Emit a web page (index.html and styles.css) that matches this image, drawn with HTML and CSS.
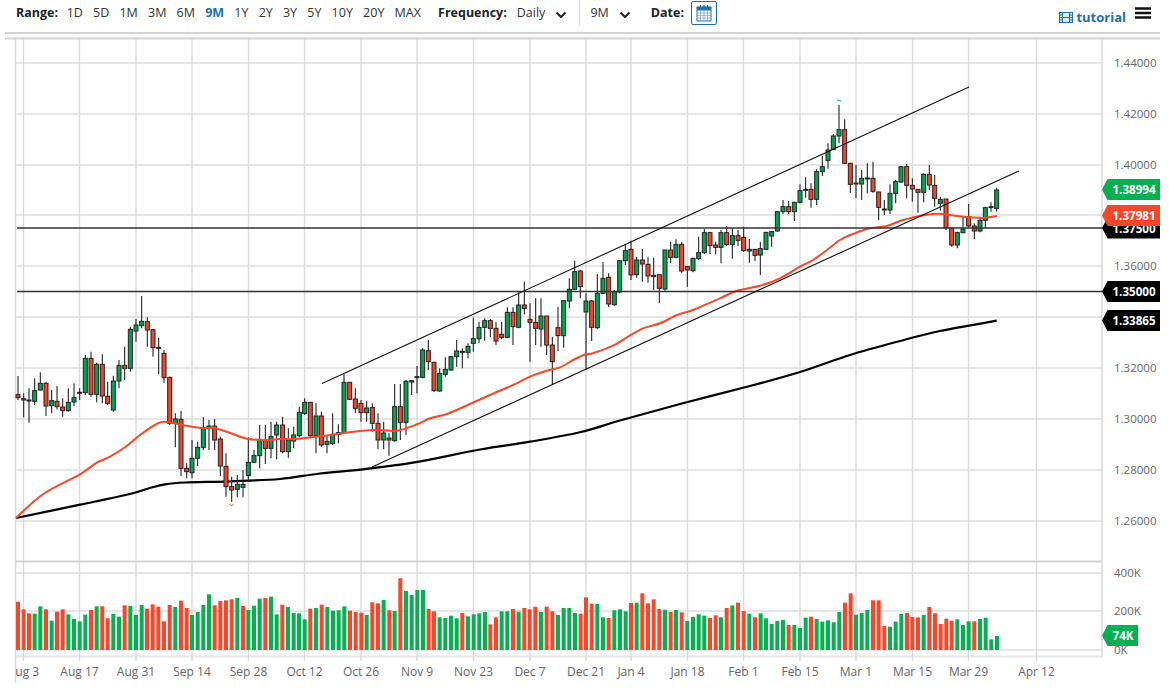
FILE: index.html
```html
<!DOCTYPE html>
<html lang="en">
<head>
<meta charset="utf-8">
<title>Chart</title>
<link rel="stylesheet" href="styles.css">
</head>
<body>
<header class="toolbar">
  <div class="controls">
    <span class="label label-range">Range:</span>
    <nav class="ranges">
      <a>1D</a><a>5D</a><a>1M</a><a>3M</a><a>6M</a><a class="active">9M</a><a>1Y</a><a>2Y</a><a>3Y</a><a>5Y</a><a>10Y</a><a>20Y</a><a>MAX</a>
    </nav>
    <span class="label label-freq">Frequency:</span>
    <span class="select select-freq">Daily
      <svg class="chevron" viewBox="0 0 12 8"><path d="M1.5 1.5 6 6l4.5-4.5"/></svg>
    </span>
    <span class="select select-period">9M
      <svg class="chevron" viewBox="0 0 12 8"><path d="M1.5 1.5 6 6l4.5-4.5"/></svg>
    </span>
    <span class="label label-date">Date:</span>
    <button class="date-btn" type="button" aria-label="Pick date">
      <svg viewBox="0 0 16 18" width="16" height="18">
        <rect class="cal-frame" x="1" y="3" width="14" height="14"/>
        <path class="cal-head" d="M1 3h14v3.500H1z"/>
        <path class="cal-rings" d="M4.500 1v4M8 1v4M11.500 1v4"/>
        <path class="cal-lines" d="M1 9h14M1 11.500h14M1 14h14M4.500 6.500V17M8 6.500V17M11.500 6.500V17"/>
      </svg>
    </button>
  </div>
  <div class="aside">
    <a class="tutorial">
      <svg viewBox="0 0 14 11" width="14" height="11">
        <rect class="film-frame" x=".5" y=".5" width="13" height="10"/>
        <path class="film-lines" d="M3.500 .5v10M10.500 .5v10M.5 3h3M.5 5.500h3M.5 8h3M10.500 3h3M10.500 5.500h3M10.500 8h3M3.500 5.500h7"/>
      </svg>
      tutorial
    </a>
    <svg class="menu" viewBox="0 0 16 12" width="16" height="12"><path d="M0 1.500h16M0 6h16M0 10.500h16"/></svg>
  </div>
</header>
<main>
  <svg id="chart" class="chart" viewBox="0 34 1169 656" width="1169" height="656" xmlns="http://www.w3.org/2000/svg"></svg>
</main>
<script src="script.js"></script>
</body>
</html>
```
FILE: styles.css
```css
html, body {
  margin: 0;
  padding: 0;
  background: #fff;
  overflow: hidden;
}
body {
  width: 1169px;
  height: 690px;
  font-family: "Open Sans", "Noto Sans", sans-serif;
  color: #333;
}
.toolbar {
  display: flex;
  justify-content: space-between;
  height: 32px;
  margin: 0 9px 0 5px;
  border-bottom: 2px solid #d4d4d4;
  box-sizing: content-box;
}
.controls {
  display: flex;
  align-items: flex-start;
  padding-left: 11px;
  height: 26px;
  line-height: 26px;
  font-size: 12.500px;
}
.label {
  font-weight: 700;
  font-size: 12.500px;
  color: #222;
}
.ranges {
  display: flex;
  margin-left: 3.500px;
}
.ranges a {
  padding: 0 5.100px;
  color: #333;
}
.ranges a.active {
  color: #1d6fb0;
  font-weight: 700;
}
.label-freq { margin-left: 12px; }
.select {
  display: flex;
  align-items: center;
  color: #333;
}
.select-freq {
  margin-left: 10px;
  padding-right: 12px;
  border-right: 1px solid #ddd;
  height: 26px;
}
.select-period { margin-left: 10px; }
.chevron {
  width: 12px;
  height: 8px;
  margin-left: 10px;
  margin-top: 4px;
  fill: none;
  stroke: #222;
  stroke-width: 2;
}
.label-date { margin-left: 20px; }
.date-btn {
  display: flex;
  align-items: center;
  justify-content: center;
  width: 26px;
  height: 24px;
  margin: 1px 0 0 7px;
  padding: 0;
  background: #fff;
  border: 1px solid #1d6fb0;
  border-radius: 2px;
}
.cal-frame { fill: #fff; stroke: #1d6fb0; stroke-width: 1; }
.cal-head { fill: #1d6fb0; }
.cal-rings { stroke: #1d6fb0; stroke-width: 1.200; fill: none; }
.cal-lines { stroke: #6fa3cd; stroke-width: .7; fill: none; }
.aside {
  display: flex;
  align-items: flex-start;
}
.tutorial {
  display: flex;
  align-items: center;
  gap: 3px;
  margin-top: 6px;
  height: 22px;
  font-size: 13px;
  font-weight: 700;
  color: #1d6fb0;
}
.film-frame { fill: #dfeaf4; stroke: #1d6fb0; stroke-width: 1; }
.film-lines { stroke: #1d6fb0; stroke-width: 1; fill: none; }
.menu {
  margin: 7px 9px 0 9px;
  fill: none;
  stroke: #111;
  stroke-width: 2.600;
}
.chart { display: block; }
.grid-h { stroke: #e6e6e6; stroke-width: 2; }
.grid-v { stroke: #dadada; stroke-width: 1.400; }
.frame { stroke: #d4d4d4; stroke-width: 2; }
.frame-thin { stroke: #d8d8d8; stroke-width: 1.500; }
.level { stroke: #333; stroke-width: 1.300; }
.channel { stroke: #111; stroke-width: 1.100; fill: none; }
.ma-red { stroke: #f4492a; stroke-width: 2; fill: none; stroke-linejoin: round; }
.ma-black { stroke: #000; stroke-width: 2.200; fill: none; stroke-linejoin: round; }
.wick { stroke: #222; stroke-width: 1.100; }
.body-g { fill: #07a04f; stroke: #222; stroke-width: 1; }
.body-r { fill: #f0452a; stroke: #222; stroke-width: 1; }
.vol-g { fill: #04b04f; }
.vol-r { fill: #f6472a; }
.mark-g { stroke: #04b04f; stroke-width: 1; fill: none; }
.mark-r { stroke: #f6472a; stroke-width: 1; fill: none; }
.axis-y, .axis-x {
  font-family: "Open Sans", "Noto Sans", sans-serif;
  fill: #666;
}
.axis-y { font-size: 11.500px; }
.axis-x { font-size: 12px; text-anchor: middle; }
.tag-g { fill: #04b04f; }
.tag-r { fill: #f6472a; }
.tag-k { fill: #000; }
.tag-text {
  font-family: "Open Sans", "Noto Sans", sans-serif;
  font-size: 11.600px;
  font-weight: 700;
  fill: #fff;
  text-anchor: middle;
}
```
FILE: script.js
```js
(function () {
  var NS = 'http://www.w3.org/2000/svg';
  var svg = document.getElementById('chart');

  function el(name, cls, attrs, text, parent) {
    var n = document.createElementNS(NS, name);
    if (cls) n.setAttribute('class', cls);
    for (var k in attrs) n.setAttribute(k, attrs[k]);
    if (text !== undefined) n.textContent = text;
    (parent || svg).appendChild(n);
    return n;
  }
  function line(cls, x1, y1, x2, y2) {
    return el('line', cls, { x1: x1, y1: y1, x2: x2, y2: y2 });
  }
  /* smooth a list of "x,y" points into a Catmull-Rom curve */
  function smooth(str) {
    var p = str.split(' ').map(function (s) { return s.split(',').map(Number); });
    var d = 'M' + p[0][0] + ' ' + p[0][1];
    for (var i = 0; i < p.length - 1; i++) {
      var a = p[Math.max(i - 1, 0)], b = p[i], c = p[i + 1], e = p[Math.min(i + 2, p.length - 1)];
      d += 'C' + (b[0] + (c[0] - a[0]) / 6).toFixed(1) + ' ' + (b[1] + (c[1] - a[1]) / 6).toFixed(1) + ' ' +
        (c[0] - (e[0] - b[0]) / 6).toFixed(1) + ' ' + (c[1] - (e[1] - b[1]) / 6).toFixed(1) + ' ' + c[0] + ' ' + c[1];
    }
    return d;
  }

  var defs = el('defs');
  var clip = el('clipPath', '', { id: 'axis-clip' }, undefined, defs);
  el('rect', '', { x: 16, y: 660, width: 1086, height: 30 }, undefined, clip);

  /* grid; a price whose label sits under a tag keeps its line but shows no text */
  var L = 15.5, R = 1102, TOP = 39;
  var prices = [['1.44000', 63], ['1.42000', 114], ['1.40000', 165], ['', 215], ['1.36000', 266],
    ['', 317], ['1.32000', 368], ['1.30000', 419], ['1.28000', 470], ['1.26000', 521]];
  prices.forEach(function (p) { line('grid-h', L, p[1], R, p[1]); });
  [573, 611, 650, 656.5].forEach(function (y) { line('grid-h', L, y, R, y); });

  var dates = [['Aug 3', 23.5], ['Aug 17', 79.5], ['Aug 31', 136], ['Sep 14', 192], ['Sep 28', 248.5],
    ['Oct 12', 304.5], ['Oct 26', 361], ['Nov 9', 417], ['Nov 23', 473.5], ['Dec 7', 530], ['Dec 21', 586],
    ['Jan 4', 631], ['Jan 18', 687.5], ['Feb 1', 743.5], ['Feb 15', 800], ['Mar 1', 856], ['Mar 15', 912.5],
    ['Mar 29', 968.5], ['Apr 12', 1036.5]];
  dates.forEach(function (d) {
    line('grid-v', d[1], TOP, d[1], 561);
    line('grid-v', d[1], 562, d[1], 661);
  });
  line('frame', 5, 38.5, 1160, 38.5);
  line('frame', L, 561.5, R, 561.5);
  line('frame-thin', L, TOP, L, 683);
  line('frame-thin', R, TOP, R, 657);

  /* volume: [x in 1/3 px, top in 1/3 px from y=560, colour] grouped by x offset */
  var vol = [
    [0, '54:125r 71:148r 87:160r 104:161g 121:139g 138:148r 155:182g 171:155r 188:148r 205:163g 222:177g 239:184g 256:164g 273:150r 290:139g 307:139r 323:175r 340:162g 357:170g 374:136r 391:138g 408:165g 425:135g 441:146r 458:133r 475:140r 492:184r 509:135r 526:141g 543:122r 560:144r 576:165g 593:156g 610:135g 627:103g 644:136r 661:123r 678:121r 695:118r 712:114g 729:138r 745:150g 762:137g 779:116g 796:114r 813:110g 830:163g 847:134r 864:141g 881:159g 897:160g'],
    [300, '14:178g 31:146r 48:144g 65:134r 82:141g 99:152g 116:151g 133:139g 150:152r 167:156r 184:158r 200:165g 217:127r 234:130r 251:120g 268:151r 284:153g 301:55r 318:93g 335:105g 352:90g 369:90g 386:147r 402:154r 419:172g 436:174g 453:167g 470:175g 487:159r 504:169g 521:163g 538:160g 555:156g 571:193r 588:172r 605:154g 622:154g 639:147r 656:155g 673:144r 689:148r 706:140r 723:156g 740:140r 757:154r 774:165g 791:144g 808:144g 825:159g 842:161r 858:112r 875:131r 892:132g'],
    [600, '9:172g 26:174r 43:151g 60:148g 77:154g 93:129r 110:128g 127:100r 144:130r 161:118r 178:147r 195:149g 212:156r 228:150g 245:157r 262:183g 279:171g 296:163g 313:167g 330:174r 347:166r 363:172g 380:144r 397:136g 414:128r 431:153r 448:161g 465:172r 482:160g 498:175g 515:192g 532:183g 549:180g 566:195r 583:195g 600:204g 617:173g 633:170r 650:177g 667:185g 684:181g 701:187g 718:156g 735:128r 752:100r 768:164g 785:159g 802:150g 819:121r 836:121r 853:198r 870:200g 887:185g'],
    [869, '97:162g 114:159r 130:171r 147:172r 164:165g 181:141r 198:160r 215:192r 232:176r 248:182r 265:178g 282:195g 299:184g 316:184r 333:177g 350:173g 367:238g 384:228g']
  ];
  vol.forEach(function (g) {
    g[1].split(' ').forEach(function (s) {
      var m = s.match(/(\d+):(\d+)([rg])/);
      var x = g[0] + m[1] / 3, y = 560 + m[2] / 3;
      el('rect', 'vol-' + m[3], { x: x - 2, y: y, width: 4, height: 650 - y });
    });
  });

  /* moving averages */
  var black = '16,518 80,504.7 130,494 150,488 165,484.3 185,482.5 231,481.3 280,479 320,473.5 363,469.3 413,462.7 480,449.5 530,441.7 580,432.3 620,420.5 680,404 750,386 800,372 850,355 900,341 940,331 996.7,320.7';
  var red = '16,518 43.3,494 80,474.3 96.7,462.7 110,456.7 125,447.3 140,435 156.7,424 165,421.7 183,425 203,428.3 213,427.7 226.7,431.7 246.7,438.7 266.7,440 280,439 295,439 323,436 343,433.3 360,431 380,430 397,430.7 417,424.3 430,418.3 447,414 470,404 490,395 513,385 530,376.7 547,370.7 560,367.3 575,359 586,354.3 593,353.3 613,345.7 627,337.3 643,328.3 660,323.3 677,315 693,310 720,298.3 737,290.7 760,285.7 780,278.3 800,266.7 813,260 827,250 840,240 853,234 870,228.3 887,226 903,220 920,216 933,214 943,214 957,216 970,217.3 983,218 997,216';
  el('path', 'ma-black', { d: smooth(black) });

  /* candles: zx high top bottom low colour, in 1/3 px of a crop */
  var candles = [
    [0, 340, '54 108 164 173 180 r|71 160 176 180 232 r|87 145 180 183 248 r|104 115 152 184 195 g|121 97 130 150 152 g|138 125 130 198 228 r|155 150 182 197 220 g|171 138 184 200 208 r|188 175 201 212 230 r|205 145 187 212 215 g|222 130 173 186 198 g|239 145 157 160 180 g|256 45 55 158 165 g|273 35 55 163 170 r|290 68 73 163 187 g|307 43 73 168 190 r|323 125 169 190 195 r'],
    [100, 285, '40 272 288 375 380 g|57 225 241 288 310 g|74 185 241 250 285 r|91 125 133 250 260 g|108 102 120 138 170 g|125 33 109 122 130 g|142 97 110 135 185 r|159 132 134 188 215 r|176 158 187 190 268 r|192 195 205 278 293 r'],
    [0, 340, '509 110 112 250 255 r|526 220 237 250 322 g|543 212 238 385 408 r|560 370 385 395 415 r|576 300 355 398 415 g|593 305 322 355 378 g|610 232 263 322 330 g|627 240 258 263 330 g|644 238 258 300 330 r|661 290 297 378 408 r|678 340 379 440 470 r|695 410 440 450 485 r|712 405 433 448 472 g|729 390 433 442 472 g|745 292 367 407 425 g|762 330 347 367 370 g|779 255 299 347 385 g|796 255 299 325 372 r|813 245 290 325 355 g|830 245 255 285 358 g'],
    [280, 280, '8 410 435 515 520 r|25 445 480 515 533 g|41 440 465 483 505 g|58 380 397 467 472 g|74 355 367 400 405 g|91 367 367 467 475 r|108 370 408 467 520 g|124 395 408 495 500 r|141 465 484 493 520 g|158 400 463 491 495 g|175 433 458 463 490 g|192 283 307 458 462 g|209 307 307 358 360 r|226 325 357 385 400 r|243 360 370 398 425 r|260 362 384 398 425 g|277 370 383 430 455 r|294 400 430 480 508 r|311 425 459 480 508 g|327 460 474 480 527 r|344 312 380 482 485 g|361 312 380 427 480 r|378 300 304 427 465 g|395 300 302 306 345 g|411 258 290 292 340 g|428 205 210 292 295 g|445 180 212 245 270 r|462 245 247 332 335 r|479 265 280 333 335 g|496 232 268 283 290 g|513 228 230 270 272 g|530 180 213 230 260 g|547 205 214 217 265 r|564 190 199 217 235 g|580 113 176 190 215 g|597 125 142 176 190 g|614 115 122 142 182 g|631 117 122 145 172 r|648 125 145 183 195 r|665 125 163 172 178 r|682 82 97 172 175 g|699 82 97 140 195 r|716 37 75 142 145 g|733 5 75 85 103 r|750 70 118 127 245 r|767 55 127 145 195 r|783 55 108 147 200 g|800 108 108 195 225 r|817 170 195 245 313 r|834 80 143 167 213 r|851 62 62 167 203 g'],
    [560, 200, '28 235 268 303 325 g|44 182 215 268 270 g|61 210 213 260 295 r|78 280 303 336 510 g|95 300 303 382 423 r|112 222 280 383 387 g|129 186 235 280 282 g|146 220 232 312 322 r|163 270 275 314 317 g|179 182 182 276 280 g|196 133 152 182 195 g|213 122 148 225 240 r|230 170 180 224 233 g|247 147 180 192 245 r|264 170 193 228 248 r|281 173 226 230 270 r|298 225 224 265 310 r|315 150 150 267 272 g|332 125 150 172 190 r|348 118 133 172 175 g|365 125 133 213 218 r|382 200 200 210 260 r|399 173 175 212 217 g|416 110 158 176 180 g|433 87 98 158 162 g|450 95 98 137 163 r|467 125 135 142 163 r|483 90 98 142 190 g|500 78 98 133 138 r|517 85 107 133 176 g|534 90 107 121 138 r|551 80 112 152 155 r|568 117 148 153 188 g|585 148 148 166 183 r|601 125 146 165 225 g|618 97 97 148 150 g|635 93 95 108 140 g'],
    [770, 90, '22 365 365 423 425 g|39 330 350 365 372 g|56 333 350 365 372 r|73 335 337 365 393 g|90 283 302 337 340 g|107 262 298 301 323 g|123 280 298 328 353 r|140 238 245 328 345 g|157 198 230 245 258 g|174 160 180 211 236 g|190 132 138 178 180 g|207 45 119 138 160 g|224 88 119 220 222 r|241 218 220 283 308 r|258 225 279 282 325 r|275 240 265 282 330 g|292 220 264 267 310 g|309 215 265 304 308 r|326 305 306 352 390 r|343 330 357 360 375 r|360 283 310 360 372 g|377 270 275 310 340 g|393 228 230 276 278 g|410 222 230 286 325 r|427 265 286 297 335 r|444 298 298 307 368 r|461 250 253 307 337 g|478 225 253 285 300 r|494 255 286 325 350 r|511 320 328 340 362 g|528 327 327 413 420 r|545 413 415 465 470 r|562 425 428 465 475 g|579 380 417 428 430 g|596 342 380 408 412 r|613 400 408 423 447 r|630 380 391 423 427 g|646 350 353 391 415 g|663 337 350 352 365 g|680 293 300 355 365 g']
  ];
  candles.forEach(function (g) {
    g[2].split('|').forEach(function (s) {
      var p = s.split(' ');
      var x = g[0] + p[0] / 3;
      var y = function (v) { return g[1] + v / 3; };
      line('wick', x, y(+p[1]), x, y(+p[4]));
      el('rect', 'body-' + p[5], { x: x - 2, y: y(+p[2]), width: 4, height: Math.max(1, (p[3] - p[2]) / 3) });
    });
  });

  el('path', 'ma-red', { d: smooth(red) });

  line('level', 17, 228, R, 228);
  line('level', 17, 291.5, R, 291.5);
  line('channel', 322, 383.5, 969, 87);
  line('channel', 372, 467, 1019, 171);

  el('path', 'mark-g', { d: 'M837 100.500q1-1 2 0t2 0' });
  el('path', 'mark-r', { d: 'M229.500 504.500q2 2 4 0' });

  /* axis labels */
  prices.forEach(function (p) { if (p[0]) el('text', 'axis-y', { x: 1114, y: p[1] + 4 }, p[0]); });
  [['400K', 573], ['200K', 611], ['0K', 650]].forEach(function (p) { el('text', 'axis-y', { x: 1114, y: p[1] + 4 }, p[0]); });
  dates.forEach(function (d) {
    var t = el('text', 'axis-x', { x: d[1], y: 676 }, d[0]);
    t.setAttribute('clip-path', 'url(#axis-clip)');
  });

  /* price tags */
  function tag(cls, cy, txt, right) {
    right = right || 1160;
    var h = 10.500;
    var d = 'M1102 ' + cy + 'L1107.500 ' + (cy - h) + 'H' + right + 'V' + (cy + h) + 'H1107.500Z';
    el('path', cls, { d: d });
    el('text', 'tag-text', { x: (1107 + right) / 2 + 0.5, y: cy + 4.5 }, txt);
  }
  tag('tag-k', 228, '1.37500');
  tag('tag-k', 291.5, '1.35000');
  tag('tag-k', 320.5, '1.33865');
  tag('tag-g', 189.5, '1.38994');
  tag('tag-r', 215.5, '1.37981');
  tag('tag-g', 635.5, '74K', 1138);
})();
```
